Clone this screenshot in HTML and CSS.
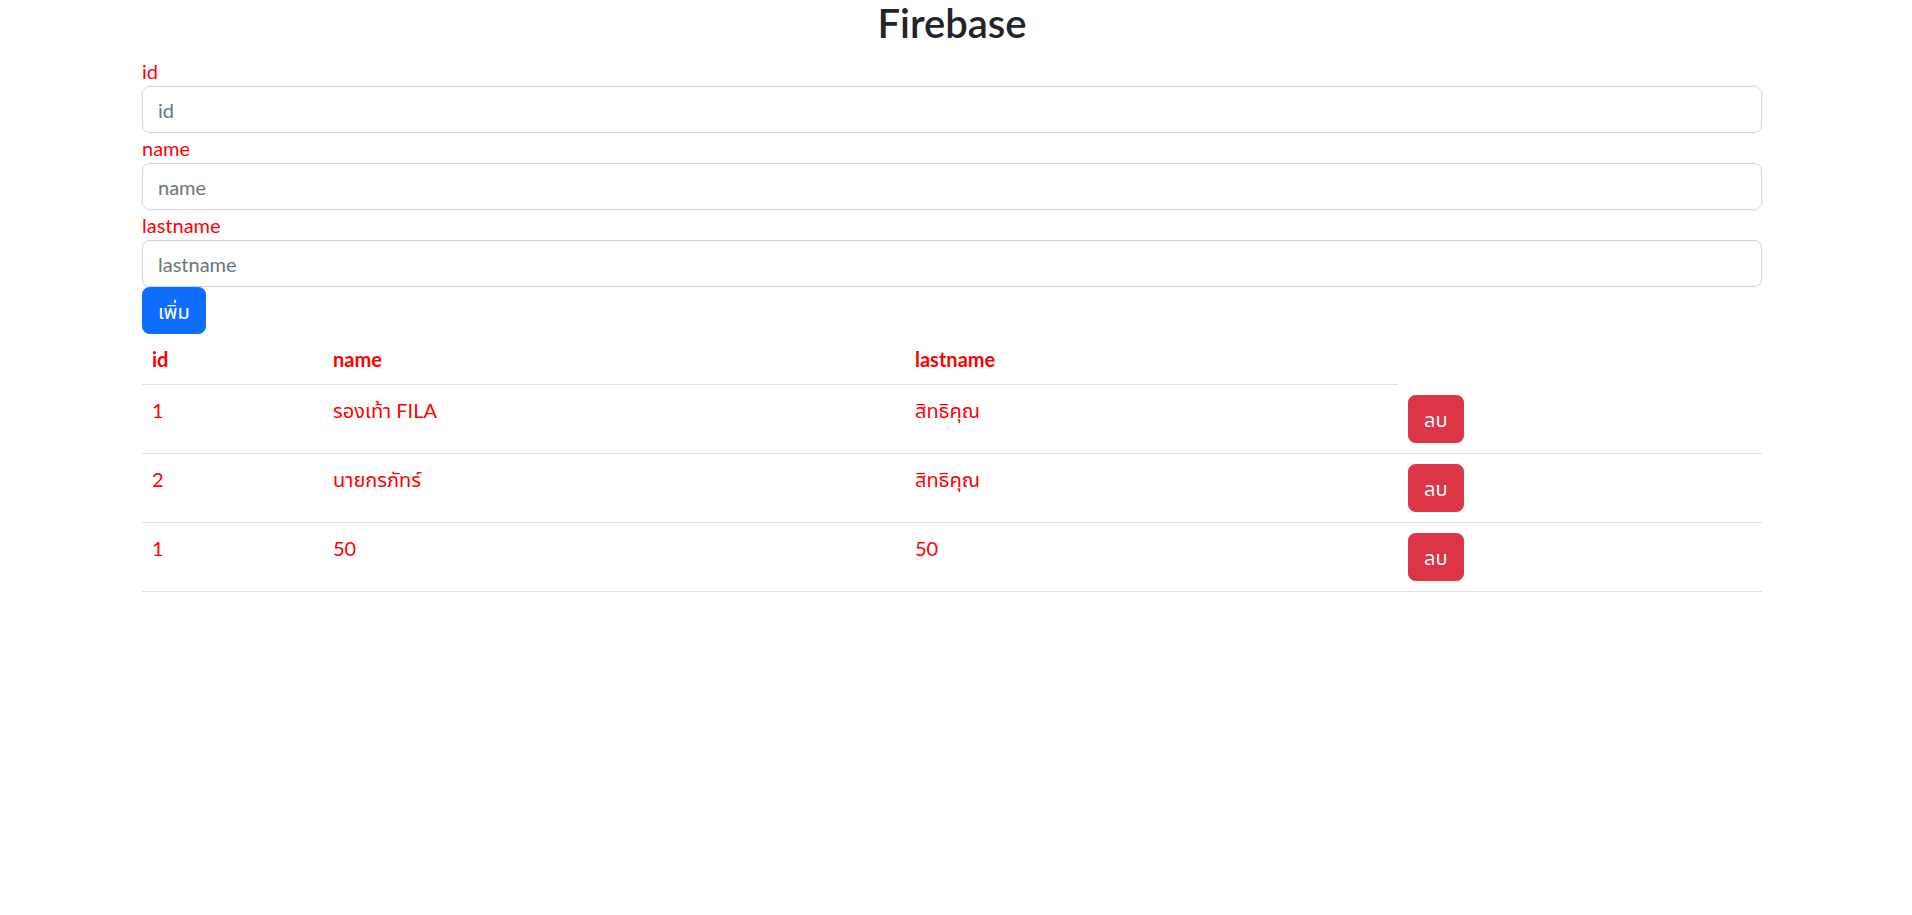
FILE: index.html
```html
<!DOCTYPE html>
<html lang="th">
<head>
<meta charset="utf-8">
<title>Firebase</title>
<link rel="stylesheet" href="styles.css">
</head>
<body>
<div class="container">
  <h2 class="title">Firebase</h2>
  <label class="field-label" for="f-id">id</label>
  <input class="form-control" id="f-id" type="text" placeholder="id">
  <label class="field-label" for="f-name">name</label>
  <input class="form-control" id="f-name" type="text" placeholder="name">
  <label class="field-label" for="f-lastname">lastname</label>
  <input class="form-control" id="f-lastname" type="text" placeholder="lastname">
  <div class="actions"><button class="btn btn-primary btn-add" type="button">เพิ่ม</button></div>
  <table class="data-table">
    <colgroup>
      <col class="c-id">
      <col class="c-name">
      <col class="c-last">
      <col class="c-act">
    </colgroup>
    <thead>
      <tr><th>id</th><th>name</th><th>lastname</th></tr>
    </thead>
    <tbody>
      <tr><td>1</td><td>รองเท้า FILA</td><td>สิทธิคุณ</td><td><button class="btn btn-danger" type="button">ลบ</button></td></tr>
      <tr><td>2</td><td>นายกรภัทร์</td><td>สิทธิคุณ</td><td><button class="btn btn-danger" type="button">ลบ</button></td></tr>
      <tr><td>1</td><td>50</td><td>50</td><td><button class="btn btn-danger" type="button">ลบ</button></td></tr>
    </tbody>
  </table>
</div>
</body>
</html>
```

FILE: styles.css
```css
* { box-sizing: border-box; }
html, body { margin: 0; padding: 0; background: #fff; }
body {
  font-family: "Segoe UI", Lato, "Noto Sans Thai", "Noto Sans Thai UI", "Leelawadee UI", Tahoma, sans-serif;
  font-size: 20px;
  line-height: 1.5;
  color: #212529;
}
.container {
  width: 1620px;
  margin-left: 142px;
  display: flex;
  flex-direction: column;
  align-items: flex-start;
}
.title {
  align-self: stretch;
  text-align: center;
  font-size: 40px;
  font-weight: 600;
  line-height: 46px;
  margin: 0 0 10px 0;
  color: #212529;
}
.field-label {
  color: #ff0000;
  font-weight: 400;
  line-height: 30px;
}
.form-control {
  display: block;
  width: 100%;
  height: 47px;
  padding: 7.5px 15px;
  font: inherit;
  font-size: 20px;
  line-height: 30px;
  color: #212529;
  background: #fff;
  border: 1px solid #ced4da;
  border-radius: 7.5px;
  outline: none;
}
.form-control::placeholder { color: #6c757d; opacity: 1; }
.actions { display: flex; }
.btn {
  display: inline-block;
  font: inherit;
  font-size: 20px;
  line-height: 30px;
  padding: 8px 15px;
  border: 1px solid transparent;
  border-radius: 7.5px;
  color: #fff;
  vertical-align: middle;
  cursor: pointer;
}
.btn-add { padding: 7.5px 15px; }
.btn-primary { background: #0d6efd; border-color: #0d6efd; }
.btn-danger { background: #dc3545; border-color: #dc3545; }
.data-table {
  width: 100%;
  border-collapse: collapse;
  table-layout: fixed;
  color: #ff0000;
  margin-bottom: 20px;
}
.c-id { width: 181px; }
.c-name { width: 582px; }
.c-last { width: 493px; }
.data-table th,
.data-table td {
  padding: 10px;
  text-align: left;
  vertical-align: top;
  border-bottom: 1px solid #dee2e6;
  line-height: 30px;
}
.data-table th { font-weight: 700; }
```
